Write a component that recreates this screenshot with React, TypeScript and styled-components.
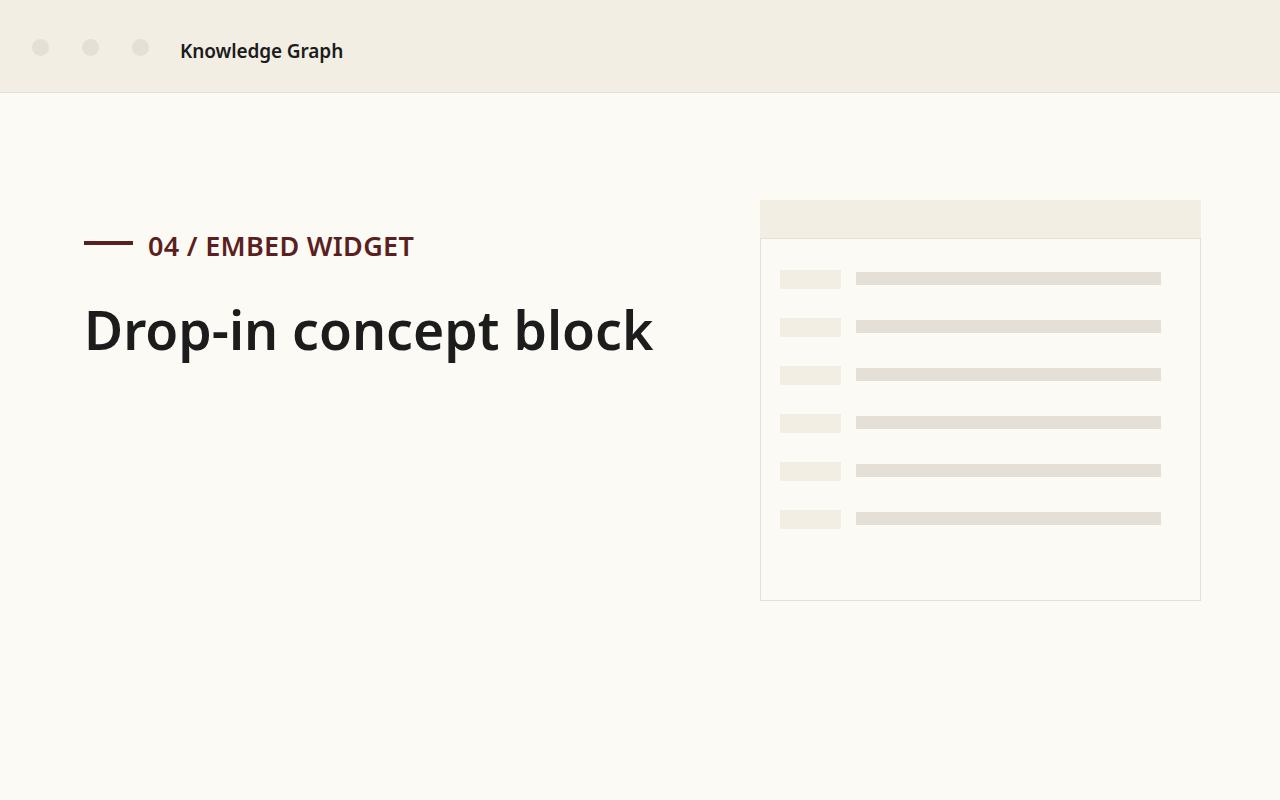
import React from 'react';
import styled, { createGlobalStyle } from 'styled-components';

const GlobalStyle = createGlobalStyle`
  html, body {
    margin: 0;
    padding: 0;
    background: #fbfaf5;
    font-family: 'Noto Sans', 'Open Sans', sans-serif;
    color: #1c1c1c;
  }
`;

const StyledPage = styled.div`
  min-height: 800px;
  display: flex;
  flex-direction: column;
`;

const StyledTopBar = styled.header`
  height: 92px;
  display: flex;
  align-items: center;
  padding-left: 32px;
  background-color: #f2eee4;
  border-bottom: 1px solid #e4e0d5;
`;

const StyledDots = styled.div`
  display: flex;
  gap: 33px;
  margin-right: 31px;
  margin-top: 2px;
`;

const StyledDot = styled.span`
  width: 17px;
  height: 17px;
  border-radius: 50%;
  background-color: #e4e0d5;
`;

const StyledTitle = styled.div`
  font-size: 19px;
  font-weight: 600;
  color: #1c1c1c;
  margin-top: 9px;
  letter-spacing: -0.1px;
`;

const StyledMain = styled.main`
  display: flex;
  justify-content: space-between;
  padding: 107px 79px 0 84px;
`;

const StyledIntro = styled.div`
  padding-top: 28px;
`;

const StyledEyebrow = styled.div`
  display: flex;
  align-items: center;
  gap: 15px;
  font-size: 27px;
  font-weight: 600;
  letter-spacing: 0.3px;
  color: #5c1f1f;
  line-height: 36px;
`;

const StyledRule = styled.span`
  width: 49px;
  height: 4px;
  background-color: #5c1f1f;
  margin-top: -7px;
`;

const StyledHeading = styled.h1`
  margin: 29px 0 0;
  font-size: 53.5px;
  font-weight: 600;
  line-height: 74px;
  color: #1c1c1c;
`;

const StyledWidget = styled.div`
  width: 441px;
  display: flex;
  flex-direction: column;
`;

const StyledWidgetHeader = styled.div`
  height: 38px;
  background-color: #f2eee4;
`;

const StyledWidgetBody = styled.div`
  box-sizing: border-box;
  height: 363px;
  border: 1px solid #e4e0d5;
  padding: 31px 19px 0;
  display: flex;
  flex-direction: column;
  gap: 29px;
`;

const StyledRow = styled.div`
  display: flex;
  align-items: flex-start;
  gap: 15px;
`;

const StyledKey = styled.span`
  width: 61px;
  height: 19px;
  background-color: #f2eee4;
`;

const StyledValue = styled.span`
  width: 305px;
  height: 13px;
  margin-top: 2px;
  background-color: #e4e0d5;
`;

const rows = [0, 1, 2, 3, 4, 5];

const App: React.FC = () => (
  <>
    <GlobalStyle />
    <StyledPage>
      <StyledTopBar>
        <StyledDots>
          <StyledDot />
          <StyledDot />
          <StyledDot />
        </StyledDots>
        <StyledTitle>Knowledge Graph</StyledTitle>
      </StyledTopBar>
      <StyledMain>
        <StyledIntro>
          <StyledEyebrow>
            <StyledRule />
            04 / EMBED WIDGET
          </StyledEyebrow>
          <StyledHeading>Drop-in concept block</StyledHeading>
        </StyledIntro>
        <StyledWidget>
          <StyledWidgetHeader />
          <StyledWidgetBody>
            {rows.map((r) => (
              <StyledRow key={r}>
                <StyledKey />
                <StyledValue />
              </StyledRow>
            ))}
          </StyledWidgetBody>
        </StyledWidget>
      </StyledMain>
    </StyledPage>
  </>
);

export default App;
